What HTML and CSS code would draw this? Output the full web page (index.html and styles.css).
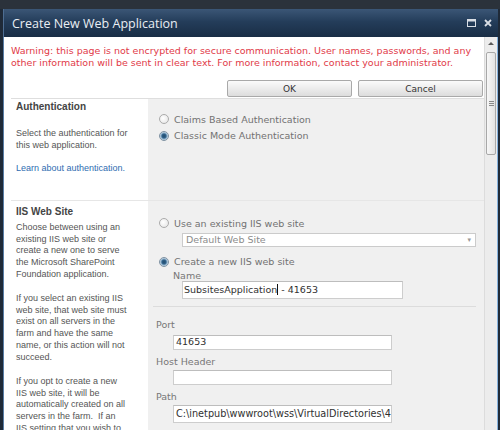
FILE: index.html
```html
<!DOCTYPE html>
<html lang="en">
<head>
    <meta charset="UTF-8">
    <title>Create New Web Application</title>
    <link rel="stylesheet" href="styles.css">
</head>
<body>
    <div class="window">
        <div class="titlebar">
            <span class="title">Create New Web Application</span>
            <span class="controls">
                <svg width="9" height="8" viewBox="0 0 9 8">
                    <rect x="0.5" y="0.5" width="8" height="7" fill="none" stroke="#d9dee5" stroke-width="1"/>
                    <rect x="0" y="0" width="9" height="2.5" fill="#d9dee5"/>
                </svg>
                <svg width="8" height="8" viewBox="0 0 8 8">
                    <path d="M1 1 L7 7 M7 1 L1 7" stroke="#d9dee5" stroke-width="1.8"/>
                </svg>
            </span>
        </div>

        <div class="dialog-body">
            <div class="main">
                <p class="warning">Warning: this page is not encrypted for secure communication. User names, passwords, and any<br>other information will be sent in clear text. For more information, contact your administrator.</p>

                <div class="actions">
                    <button>OK</button>
                    <button>Cancel</button>
                </div>

                <div class="sections">
                    <div class="section section-auth">
                        <div class="about">
                            <h3>Authentication</h3>
                            <p>Select the authentication for<br>this web application.</p>
                            <p><a href="#">Learn about authentication.</a></p>
                        </div>
                        <div class="fields">
                            <div class="option"><span class="radio"></span>Claims Based Authentication</div>
                            <div class="option"><span class="radio checked"></span>Classic Mode Authentication</div>
                        </div>
                    </div>

                    <div class="section section-iis">
                        <div class="about">
                            <h3>IIS Web Site</h3>
                            <p>Choose between using an<br>existing IIS web site or<br>create a new one to serve<br>the Microsoft SharePoint<br>Foundation application.</p>
                            <p>If you select an existing IIS<br>web site, that web site must<br>exist on all servers in the<br>farm and have the same<br>name, or this action will not<br>succeed.</p>
                            <p>If you opt to create a new<br>IIS web site, it will be<br>automatically created on all<br>servers in the farm.&nbsp; If an<br>IIS setting that you wish to</p>
                        </div>
                        <div class="fields">
                            <div class="option"><span class="radio"></span>Use an existing IIS web site</div>
                            <div class="select">
                                <span>Default Web Site</span>
                                <span class="drop">&#9662;</span>
                            </div>
                            <div class="option option-new"><span class="radio checked"></span>Create a new IIS web site</div>
                            <div class="label label-name">Name</div>
                            <div class="textbox name-box">SubsitesApplication<span class="caret"></span> - 41653</div>

                            <div class="divider"></div>

                            <div class="label label-port">Port</div>
                            <div class="textbox port-box">41653</div>
                            <div class="label label-host">Host Header</div>
                            <div class="textbox host-box"></div>
                            <div class="label label-path">Path</div>
                            <div class="textbox path-box">C:\inetpub\wwwroot\wss\VirtualDirectories\41653</div>
                        </div>
                    </div>
                </div>
            </div>

            <div class="scrollbar">
                <span class="arrow"></span>
                <span class="thumb"><span class="grip"></span></span>
            </div>
        </div>
    </div>
</body>
</html>
```

FILE: styles.css
```css
* {
    box-sizing: border-box;
}
html, body {
    margin: 0;
}
body {
    width: 500px;
    height: 430px;
    overflow: hidden;
    background: #29313b;
    font-family: "DejaVu Sans", Verdana, sans-serif;
}
.window {
    height: 430px;
    padding: 0 2px 0 3px;
    display: flex;
    flex-direction: column;
    background: #1f2a38;
    border-top: 9px solid #2b323b;
}
.titlebar {
    flex: none;
    height: 28px;
    display: flex;
    align-items: center;
    justify-content: space-between;
    padding: 0 6px 0 8px;
    background: linear-gradient(#3b5676, #243d5a 45%, #192d45);
    border-left: 1px solid #4d6d92;
}
.title {
    font-family: "Open Sans", sans-serif;
    font-size: 12.5px;
    color: #e9eef3;
}
.controls {
    display: flex;
    align-items: center;
    gap: 8px;
}
.dialog-body {
    flex: 1;
    min-height: 0;
    display: flex;
    background: #fff;
    border-left: 1px solid #5a7ea6;
    border-right: 1px solid #86b2de;
}
.main {
    flex: 1;
    min-width: 0;
    overflow: hidden;
}
.warning {
    margin: 0;
    padding: 8px 0 0 7px;
    font-size: 9.5px;
    line-height: 11.5px;
    color: #e13a48;
    white-space: nowrap;
}
.actions {
    display: flex;
    justify-content: flex-end;
    gap: 6px;
    margin-top: 12px;
    padding-right: 1px;
}
button {
    width: 125px;
    height: 17px;
    padding: 0;
    font-family: "DejaVu Sans", Verdana, sans-serif;
    font-size: 9px;
    color: #333;
    border: 1px solid #a9a9a9;
    border-radius: 2px;
    background: linear-gradient(#fbfbfb, #ececec 50%, #dcdcdc);
}
.sections {
    margin: 1px 0 0 7px;
    border-top: 1px solid #dedede;
}
.section {
    display: grid;
    grid-template-columns: 137px 1fr;
}
.section + .section {
    border-top: 1px solid #e6e6e6;
}
.section-auth {
    min-height: 101px;
}
.about {
    padding: 2px 0 0 5px;
    font-family: "Liberation Sans", Arial, sans-serif;
    white-space: nowrap;
}
.section-iis .about {
    padding-top: 5px;
}
.about h3 {
    margin: 0;
    font-size: 10px;
    line-height: 12px;
    color: #444;
}
.about p {
    margin: 12.7px 0 0;
    font-size: 9px;
    line-height: 11.7px;
    color: #555;
}
.section-auth .about p {
    margin-top: 10.5px;
    line-height: 12.4px;
}
.section-auth .about h3 + p {
    margin-top: 13.5px;
}
.section-iis .about h3 + p {
    margin-top: 3.8px;
}
.about a {
    color: #2f6db1;
    text-decoration: none;
}
.fields {
    background: #f0f0f0;
    padding: 12px 8px 0 5px;
    font-size: 9.5px;
    color: #727272;
}
.section-iis .fields {
    padding-top: 14px;
}
.option {
    display: flex;
    align-items: center;
    gap: 5px;
    height: 16.5px;
    margin-left: 6px;
}
.radio {
    width: 10px;
    height: 10px;
    flex: none;
    border-radius: 50%;
    border: 1px solid #ababab;
    background: radial-gradient(circle at 40% 40%, #fff, #e2e2e2);
}
.radio.checked {
    border-color: #7f92a2;
    background: radial-gradient(circle, #234c6c 0, #2f6089 2px, #86aac6 3px, #e9f0f5 4.5px);
}
.select {
    display: flex;
    justify-content: space-between;
    align-items: center;
    width: 294px;
    height: 14px;
    margin: 1px 0 0 29px;
    padding: 0 4px 0 3px;
    background: #fff;
    border: 1px solid #cbcbcb;
    color: #8c8c8c;
    font-size: 9.5px;
}
.drop {
    font-size: 7px;
    color: #999;
}
.option-new {
    margin-top: 7px;
}
.label {
    line-height: 11px;
    color: #777;
}
.label-name {
    padding-left: 20px;
}
.textbox {
    height: 18px;
    line-height: 16px;
    margin-left: 29px;
    padding-left: 1px;
    overflow: hidden;
    white-space: nowrap;
    background: #fff;
    border: 1px solid #cdcdcd;
    border-top-color: #bdbdbd;
    color: #303030;
    font-size: 9.5px;
}
.name-box {
    width: 221px;
}
.caret {
    display: inline-block;
    width: 0;
    height: 11px;
    vertical-align: -2px;
    border-left: 1px solid #111;
}
.divider {
    margin-top: 7px;
    border-top: 1px solid #dcdcdc;
}
.label-port,
.label-host,
.label-path {
    line-height: 12px;
    padding-left: 3px;
}
.label-port {
    margin-top: 12px;
}
.label-host,
.label-path {
    margin-top: 6px;
}
.port-box,
.host-box,
.path-box {
    width: 219px;
    margin-left: 20px;
    padding-left: 2px;
}
.port-box {
    height: 14.5px;
    line-height: 12.5px;
    margin-top: 4px;
}
.host-box {
    height: 15px;
    margin-top: 2.5px;
}
.path-box {
    height: 18px;
    line-height: 16px;
    margin-top: 2px;
    font-size: 9.7px;
}
.scrollbar {
    flex: none;
    width: 13px;
    display: flex;
    flex-direction: column;
    align-items: center;
    background: #ececec;
    border-left: 1px solid #dcdcdc;
}
.arrow {
    margin-top: 5px;
    width: 0;
    height: 0;
    border-left: 3px solid transparent;
    border-right: 3px solid transparent;
    border-bottom: 3px solid #5a5a5a;
}
.thumb {
    width: 10px;
    height: 103px;
    margin-top: 7px;
    display: flex;
    align-items: center;
    justify-content: center;
    border: 1px solid #a8a8a8;
    border-radius: 2px;
    background: linear-gradient(to right, #f7f7f7, #e2e2e2);
}
.grip {
    width: 5px;
    height: 5px;
    background: repeating-linear-gradient(#8a8a8a 0 1px, transparent 1px 2px);
}
```
